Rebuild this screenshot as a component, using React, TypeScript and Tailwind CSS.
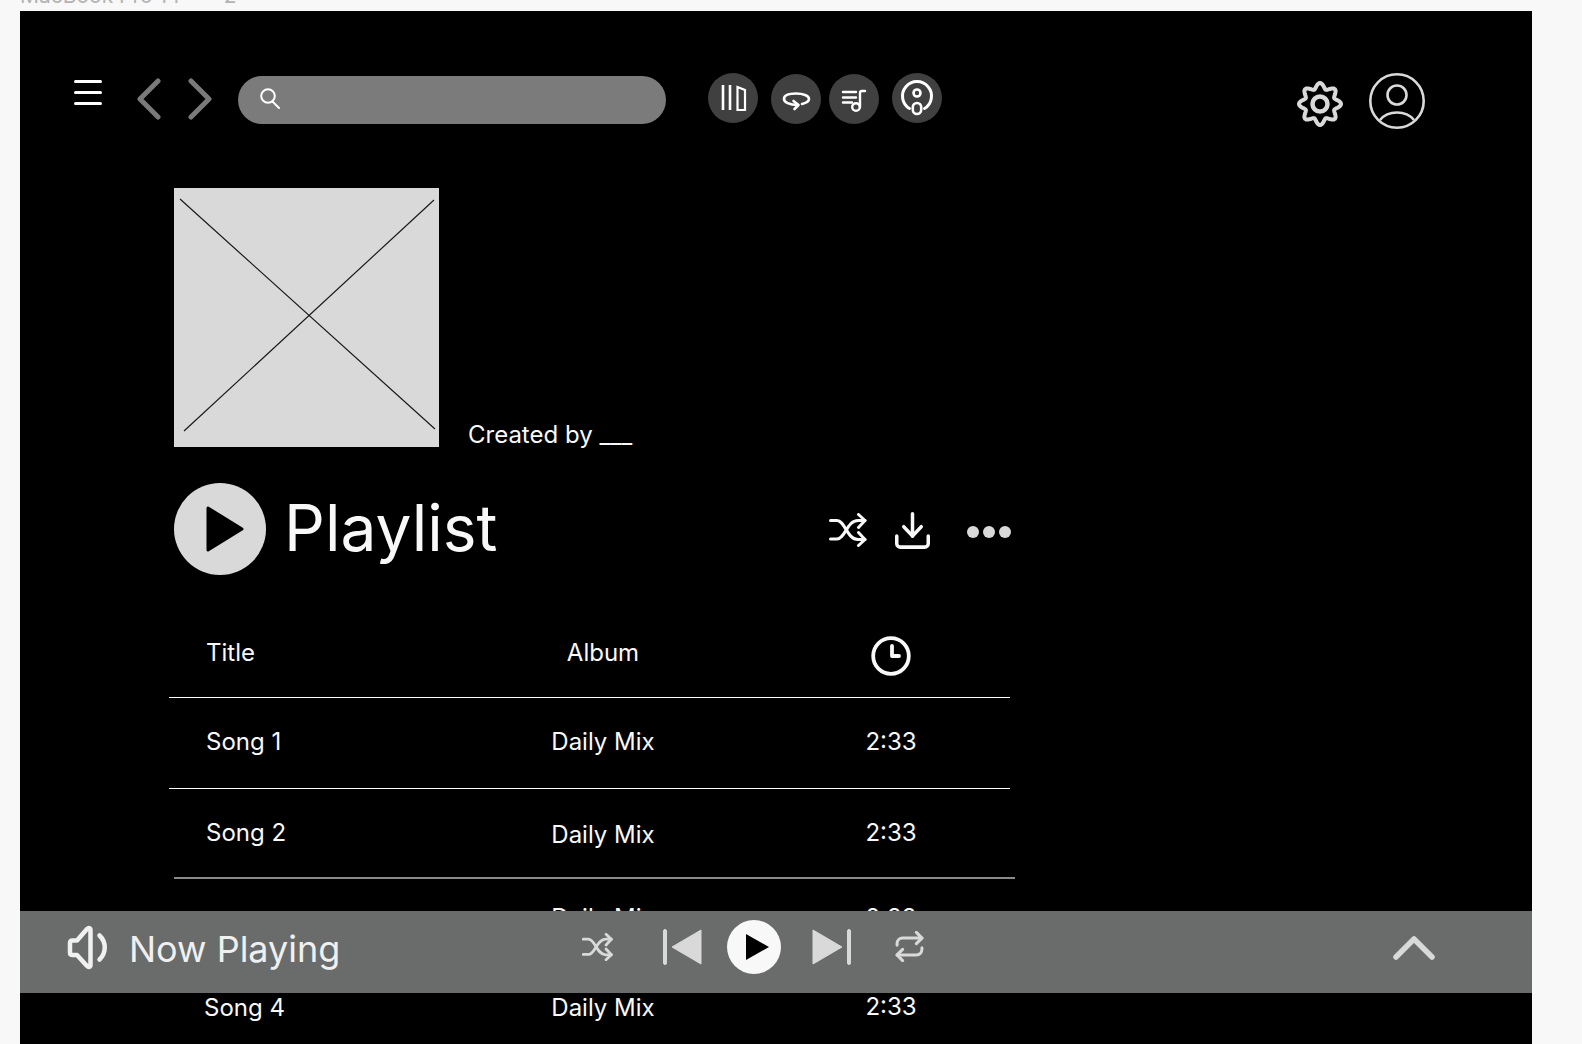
import React from 'react';
import { Download, Repeat } from 'lucide-react';

const rows = [
  { song: 'Song 1', h: 'h-[91px] pt-[29px] border-b border-white', albumCls: '' },
  { song: 'Song 2', h: 'h-[88px] pt-[29px]', albumCls: 'mt-[2px]' },
];

// 8 rounded lobes, same outline as the gear in the mock
const gearPath = Array.from({ length: 121 }, (_, i) => {
  const a = (i / 120) * Math.PI * 2;
  const r = 18.2 + 2.8 * Math.cos(8 * a);
  const x = 23 + r * Math.sin(a);
  const y = 23 - r * Math.cos(a);
  return `${i === 0 ? 'M' : 'L'}${x.toFixed(2)} ${y.toFixed(2)}`;
}).join(' ') + ' Z';

const LibraryIcon = () => (
  <svg viewBox="0 0 50 50" className="w-[50px] h-[50px]" fill="none" stroke="white">
    <path d="M15 12v25M22 12v25" strokeWidth="2.6" />
    <path d="M29.500 14l7.500 3v20h-7.500z" strokeWidth="2.200" />
  </svg>
);

const LoopIcon = () => (
  <svg viewBox="0 0 50 50" className="w-[50px] h-[50px]" fill="none" stroke="white" strokeWidth="2.600" strokeLinecap="round" strokeLinejoin="round">
    <path d="M31 30c4-1 7-2.500 7-5 0-3.500-6-5.500-13-5.500S13 21.500 13 25c0 3 5 6 14 6" />
    <path d="M22.500 27l5 4-4 4" />
  </svg>
);

const QueueIcon = () => (
  <svg viewBox="0 0 50 50" className="w-[50px] h-[50px]" fill="none" stroke="white" strokeWidth="2.400" strokeLinecap="round">
    <path d="M14 18h13M14 23.500h13M14 28.500h9" />
    <path d="M31 33V19c0-1.500 1-2 2-2h3" />
    <circle cx="27" cy="33" r="3.800" />
  </svg>
);

const PodcastIcon = () => (
  <svg viewBox="0 0 50 50" className="w-[50px] h-[50px]" fill="none" stroke="white" strokeLinecap="round">
    <path d="M17.500 35.500a14.500 14.500 0 1 1 15 0" strokeWidth="3" />
    <circle cx="25" cy="20" r="3.500" strokeWidth="2.600" />
    <rect x="20.800" y="30" width="8.400" height="11" rx="4.200" strokeWidth="2.600" />
  </svg>
);

const ShuffleIcon = ({ className, color, width }: { className: string; color: string; width: number }) => (
  <svg viewBox="0 0 38 34" className={className} fill="none" stroke={color} strokeWidth={width} strokeLinecap="round" strokeLinejoin="round" preserveAspectRatio="none">
    <path d="M1.500 7.500H8c8 0 10 19 21 19h7" />
    <path d="M1.500 26H8c8 0 10-18.500 21-18.500h7" />
    <path d="M29.500 1.500l6.500 6-6.500 7M29.500 19.500l6.500 7-6.500 6" />
  </svg>
);

const App: React.FC = () => {
  return (
    <div className="h-[1044px] overflow-hidden bg-[#f8f8f8] font-['Inter',sans-serif] font-normal text-[24px] leading-[29px] text-[#f8f8f8]">
      <div className="h-[11px] overflow-hidden pl-[20px]">
        <div className="-mt-[16px] text-[21px] leading-[24px] text-[#b3b3b3] whitespace-pre">MacBook Pro 14"  -  2</div>
      </div>

      <div className="relative ml-[20px] w-[1512px] h-[1033px] overflow-hidden bg-black">
        {/* top bar */}
        <div className="flex items-start pt-[62px] pl-[54px]">
          <div className="mt-[7px] w-[28px] flex flex-col gap-[8px]">
            <div className="h-[3px] rounded-full bg-white" />
            <div className="h-[3px] rounded-full bg-white" />
            <div className="h-[3px] rounded-full bg-white" />
          </div>
          <svg viewBox="0 0 26 42" className="ml-[34px] mt-[5px] w-[26px] h-[42px]" fill="none" stroke="#7a7a7a" strokeWidth="5" strokeLinecap="round" strokeLinejoin="round">
            <path d="M22 3 4 21l18 18" />
          </svg>
          <svg viewBox="0 0 26 42" className="ml-[25px] mt-[5px] w-[26px] h-[42px]" fill="none" stroke="#7a7a7a" strokeWidth="5" strokeLinecap="round" strokeLinejoin="round">
            <path d="M4 3l18 18L4 39" />
          </svg>
          <div className="ml-[25px] mt-[3px] w-[428px] h-[48px] rounded-[24px] bg-[#7b7b7b] flex items-start pl-[22px] pt-[12px]">
            <svg viewBox="0 0 20 21" className="w-[20px] h-[21px]" fill="none" stroke="white" strokeWidth="2" strokeLinecap="round">
              <circle cx="8" cy="8" r="6.800" />
              <path d="M12.500 13.500 19 20" />
            </svg>
          </div>
          <div className="ml-[42px] w-[50px] h-[50px] rounded-full bg-[#404040]"><LibraryIcon /></div>
          <div className="ml-[13px] mt-[1px] w-[50px] h-[50px] rounded-full bg-[#404040]"><LoopIcon /></div>
          <div className="ml-[8px] mt-[1px] w-[50px] h-[50px] rounded-full bg-[#404040]"><QueueIcon /></div>
          <div className="ml-[13px] w-[50px] h-[50px] rounded-full bg-[#404040]"><PodcastIcon /></div>
          <svg viewBox="0 0 46 46" className="ml-[355px] mt-[8px] w-[46px] h-[46px]" fill="none" stroke="#d9d9d9" strokeWidth="4" strokeLinejoin="round">
            <path d={gearPath} />
            <circle cx="23" cy="23" r="7.500" strokeWidth="4.500" />
          </svg>
          <svg viewBox="0 0 56 56" className="ml-[26px] w-[56px] h-[56px]" fill="none" stroke="#d9d9d9" strokeWidth="2.600">
            <circle cx="28" cy="28" r="26.700" />
            <circle cx="28" cy="22" r="9.500" />
            <path d="M11 47c4-5 10-7.500 17-7.500s13 2.500 17 7.500" />
          </svg>
        </div>

        {/* cover */}
        <div className="mt-[59px] ml-[154px] flex items-end">
          <div className="w-[265px] h-[259px] bg-[#d9d9d9]">
            <svg viewBox="0 0 265 259" className="w-full h-full" fill="none" stroke="#1a1a1a" strokeWidth="1.200">
              <path d="M6 11 261 241M260 12 10 243" />
            </svg>
          </div>
          <div className="ml-[29px] -mb-[2px]">Created by ___</div>
        </div>

        {/* playlist heading */}
        <div className="mt-[36px] ml-[154px] flex items-start">
          <div className="w-[92px] h-[92px] rounded-full bg-[#d9d9d9] flex items-center justify-center">
            <svg viewBox="0 0 38 46" className="ml-[9px] w-[38px] h-[46px]" fill="black" stroke="black" strokeWidth="3" strokeLinejoin="round">
              <path d="M2 2v42l34-21z" />
            </svg>
          </div>
          <div className="ml-[18px] mt-[6px] w-[545px] text-[64px] leading-[77px]">Playlist</div>
          <ShuffleIcon className="mt-[30px] w-[38px] h-[34px]" color="#f8f8f8" width={3} />
          <Download viewBox="2 2 20 20" className="ml-[28px] mt-[29px] w-[35px] h-[37px] text-[#f8f8f8]" strokeWidth={2} preserveAspectRatio="none" />
          <div className="ml-[37px] mt-[43px] flex gap-[4px]">
            <div className="w-[12px] h-[12px] rounded-full bg-[#d9d9d9]" />
            <div className="w-[12px] h-[12px] rounded-full bg-[#d9d9d9]" />
            <div className="w-[12px] h-[12px] rounded-full bg-[#d9d9d9]" />
          </div>
        </div>

        {/* song table */}
        <div className="ml-[149px] w-[841px]">
          <div className="h-[123px] pt-[61px] border-b border-white flex items-start">
            <div className="w-[334px] pl-[37px] mt-[2px]">Title</div>
            <div className="w-[200px] text-center mt-[2px]">Album</div>
            <div className="ml-[88px] w-[200px] flex justify-center">
              <svg viewBox="0 0 40 40" className="w-[40px] h-[40px]" fill="none" stroke="#f8f8f8" strokeWidth="3.800" strokeLinecap="round" strokeLinejoin="round">
                <circle cx="20" cy="20" r="17.800" />
                <path d="M21 10v10h7" />
              </svg>
            </div>
          </div>
          {rows.map((r) => (
            <div key={r.song} className={`flex items-start ${r.h}`}>
              <div className="w-[334px] pl-[37px]">{r.song}</div>
              <div className={`w-[200px] text-center ${r.albumCls}`}>Daily Mix</div>
              <div className="ml-[88px] w-[200px] text-center">2:33</div>
            </div>
          ))}
          <div className="ml-[5px] w-[841px] h-[2px] bg-[#8a8a8a]" />
          <div className="h-[111px] pt-[24px] flex items-start">
            <div className="w-[334px] pl-[37px] mt-[14px]">&nbsp;</div>
            <div className="w-[200px] text-center">Daily Mix</div>
            <div className="ml-[88px] w-[200px] text-center">2:33</div>
          </div>
          <div className="flex items-start">
            <div className="w-[334px] pl-[35px] mt-[3px]">Song 4</div>
            <div className="w-[200px] text-center mt-[3px]">Daily Mix</div>
            <div className="ml-[88px] w-[200px] text-center mt-[2px]">2:33</div>
          </div>
        </div>

        {/* now playing bar */}
        <div className="absolute left-0 right-0 top-[900px] h-[82px] bg-[#6a6c6b] flex items-start pl-[47px]">
          <svg viewBox="0 0 41 45" className="mt-[14px] w-[41px] h-[45px]" fill="none" stroke="#f0f0f0" strokeWidth="4.500" strokeLinecap="round" strokeLinejoin="round">
            <path d="M3 18c0-1.500 1-2.500 2.500-2.500H10L20 4c1.500-1.500 3.500-1 3.500 1v35c0 2-2 2.500-3.500 1L10 30H5.500C4 30 3 29 3 27.500z" />
            <path d="M32.500 10.500c7 6.500 7 17.500 0 24" />
          </svg>
          <div className="ml-[21px] mt-[16px] w-[453px] text-[36px] leading-[44px] text-[#f0f0f0]">Now Playing</div>
          <ShuffleIcon className="mt-[22px] w-[31px] h-[28px]" color="#d9d9d9" width={3.4} />
          <svg viewBox="0 0 39 36" className="ml-[50px] mt-[18px] w-[39px] h-[36px]" fill="#d9d9d9" stroke="#d9d9d9" strokeLinejoin="round">
            <rect x="0.500" y="0.500" width="3" height="35" rx="1.500" />
            <path d="M38 1v34L9 18z" strokeWidth="1" />
          </svg>
          <div className="ml-[25px] mt-[9px] w-[54px] h-[54px] rounded-full bg-[#f8f8f8] flex items-center justify-center">
            <svg viewBox="0 0 24 26" className="ml-[6px] w-[24px] h-[26px]" fill="black">
              <path d="M1 0 24 13 1 26z" />
            </svg>
          </div>
          <svg viewBox="0 0 39 36" className="ml-[31px] mt-[18px] w-[39px] h-[36px]" fill="#d9d9d9" stroke="#d9d9d9" strokeLinejoin="round">
            <rect x="35.500" y="0.500" width="3" height="35" rx="1.500" />
            <path d="M1 1v34l29-17z" strokeWidth="1" />
          </svg>
          <Repeat viewBox="1.500 1 21 22" className="ml-[44px] mt-[20px] w-[29px] h-[31px] text-[#d9d9d9]" strokeWidth={2.200} preserveAspectRatio="none" />
          <svg viewBox="0 0 42 24" className="ml-[469px] mt-[25px] w-[42px] h-[24px]" fill="none" stroke="#d9d9d9" strokeWidth="5.500" strokeLinecap="round" strokeLinejoin="round">
            <path d="M3 21 21 3l18 18" />
          </svg>
        </div>
      </div>
    </div>
  );
};

export default App;
